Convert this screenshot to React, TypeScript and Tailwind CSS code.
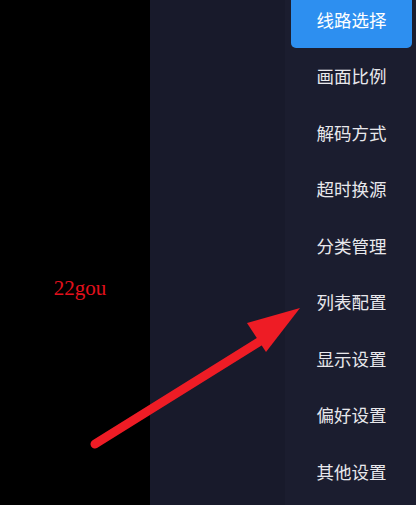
const items = ['线路选择', '画面比例', '解码方式', '超时换源', '分类管理', '列表配置', '显示设置', '偏好设置', '其他设置']

export default function App() {
  const active = 0

  return (
    <div className="relative flex h-[505px] w-[416px] overflow-hidden bg-black font-['Noto_Sans_CJK_SC',sans-serif]">
      {/* Player area */}
      <div className="flex w-[150px] shrink-0 items-center justify-center bg-black pl-[10px]">
        <span className="mt-[73px] font-['Liberation_Serif',serif] text-[21px] text-[#e3101c]">22gou</span>
      </div>

      {/* Side panel */}
      <div className="flex-1 bg-[#181a2b]" />

      {/* Menu */}
      <div className="w-[131px] shrink-0 bg-[#1b1d2f] pl-[6px] pr-[4px]">
        <ul className="-mt-[9px] flex flex-col">
          {items.map((item, i) => (
            <li
              key={item}
              className={`flex h-[56.5px] items-center justify-center rounded-[5px] text-[17.5px] leading-none ${
                i === active ? 'bg-[#2d8ff0] text-white' : 'text-[#e8e8ec]'
              }`}
            >
              {item}
            </li>
          ))}
        </ul>
      </div>

      {/* Arrow overlay */}
      <svg className="pointer-events-none absolute inset-0" width="416" height="505" viewBox="0 0 416 505">
        <line x1="95" y1="444" x2="262" y2="340" stroke="#ee1c25" strokeWidth="9" strokeLinecap="round" />
        <polygon points="300,308 247,323 266,352" fill="#ee1c25" />
      </svg>
    </div>
  )
}
